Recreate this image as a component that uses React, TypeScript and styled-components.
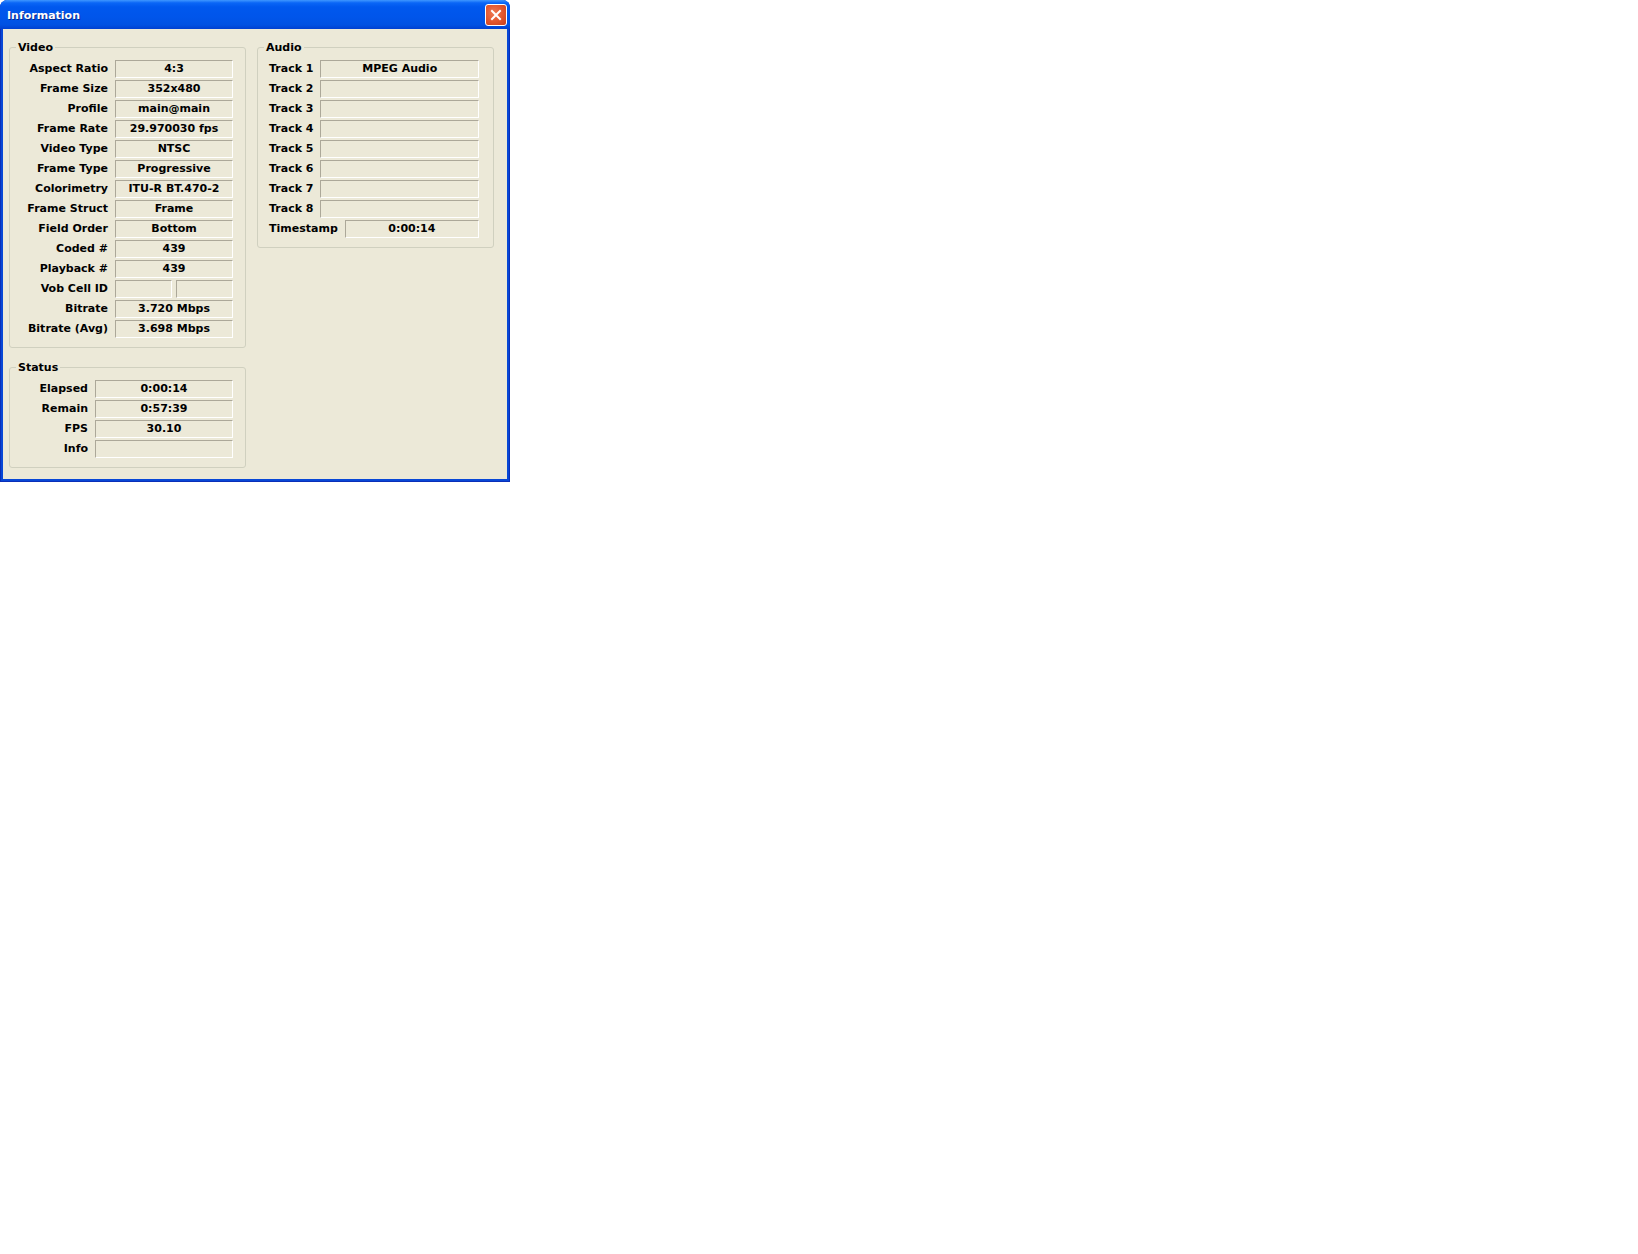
import React from 'react';
import styled, { createGlobalStyle } from 'styled-components';

const GlobalStyle = createGlobalStyle`
  body {
    margin: 0;
    background: #ffffff;
    font-family: "DejaVu Sans", Tahoma, sans-serif;
  }
`;

const Window = styled.div`
  width: 510px;
  height: 482px;
  box-sizing: border-box;
  display: flex;
  flex-direction: column;
  background: #0847d6;
  border-radius: 8px 8px 0 0;
  box-shadow: inset 1px 0 #0a2fb8, inset -1px 0 #0a2fb8, inset 0 -1px #0a2fb8;
`;

const TitleBar = styled.div`
  height: 29px;
  flex: none;
  display: flex;
  align-items: center;
  justify-content: space-between;
  padding: 0 3px 0 7px;
  border-radius: 7px 7px 0 0;
  background: linear-gradient(
    to bottom,
    #3f97ff 0%,
    #0a66f6 10%,
    #0058ee 24%,
    #0055ea 60%,
    #0051e2 86%,
    #0040d0 100%
  );
`;

const TitleText = styled.span`
  color: #ffffff;
  font-weight: bold;
  font-size: 11px;
  text-shadow: 1px 1px #0b2a8a;
  margin-top: 2px;
`;

const CloseButton = styled.div`
  width: 22px;
  height: 22px;
  box-sizing: border-box;
  border: 1px solid #ffffff;
  border-radius: 3px;
  display: flex;
  align-items: center;
  justify-content: center;
  background: radial-gradient(circle at 40% 40%, #ee7a55 0%, #e2552c 55%, #c53f1d 100%);
`;

const Client = styled.div`
  flex: 1;
  margin: 0 3px 3px;
  background: #ece9d8;
  display: flex;
  align-items: flex-start;
  gap: 11px;
  padding: 12px 0 0 6px;
`;

const Column = styled.div`
  display: flex;
  flex-direction: column;
  gap: 13px;
`;

const Group = styled.fieldset<{ $width: number }>`
  margin: 0;
  width: ${(p) => p.$width}px;
  box-sizing: border-box;
  padding: 0;
  border: 1px solid #d0d0bf;
  border-radius: 3px;
  min-width: 0;
`;

const Legend = styled.legend`
  padding: 0 2px;
  margin-left: 6px;
  font-weight: bold;
  font-size: 11px;
  line-height: 13px;
  color: #000000;
`;

const GroupBody = styled.div<{ $pad: string }>`
  padding: ${(p) => p.$pad};
`;

const FieldGrid = styled.div<{ $label: number; $value: number }>`
  display: grid;
  grid-template-columns: ${(p) => p.$label}px ${(p) => p.$value}px;
  grid-auto-rows: 18px;
  column-gap: 7px;
  row-gap: 2px;
`;

const Label = styled.div<{ $align?: string }>`
  font-weight: bold;
  font-size: 11px;
  line-height: 18px;
  color: #000000;
  text-align: ${(p) => p.$align || 'right'};
  white-space: nowrap;
`;

const ValueBox = styled.div`
  flex: 1;
  height: 18px;
  box-sizing: border-box;
  border: 1px solid;
  border-color: #aca899 #ffffff #ffffff #aca899;
  font-weight: bold;
  font-size: 11px;
  line-height: 16px;
  text-align: center;
  color: #000000;
  white-space: nowrap;
  overflow: hidden;
`;

const SplitValue = styled.div`
  display: flex;
  gap: 4px;
`;

const AudioList = styled.div`
  display: flex;
  flex-direction: column;
  gap: 2px;
`;

const AudioRow = styled.div`
  display: flex;
  align-items: center;
  gap: 7px;
  height: 18px;
`;

const videoRows: [string, string | null][] = [
  ['Aspect Ratio', '4:3'],
  ['Frame Size', '352x480'],
  ['Profile', 'main@main'],
  ['Frame Rate', '29.970030 fps'],
  ['Video Type', 'NTSC'],
  ['Frame Type', 'Progressive'],
  ['Colorimetry', 'ITU-R BT.470-2'],
  ['Frame Struct', 'Frame'],
  ['Field Order', 'Bottom'],
  ['Coded #', '439'],
  ['Playback #', '439'],
  ['Vob Cell ID', null],
  ['Bitrate', '3.720 Mbps'],
  ['Bitrate (Avg)', '3.698 Mbps'],
];

const statusRows = [
  ['Elapsed', '0:00:14'],
  ['Remain', '0:57:39'],
  ['FPS', '30.10'],
  ['Info', ''],
];

const audioRows = [
  ['Track 1', 'MPEG Audio'],
  ['Track 2', ''],
  ['Track 3', ''],
  ['Track 4', ''],
  ['Track 5', ''],
  ['Track 6', ''],
  ['Track 7', ''],
  ['Track 8', ''],
  ['Timestamp', '0:00:14'],
];

const App: React.FC = () => {
  return (
    <>
      <GlobalStyle />
      <Window>
        <TitleBar>
          <TitleText>Information</TitleText>
          <CloseButton>
            <svg width="12" height="12" viewBox="0 0 12 12">
              <path d="M2 2 L10 10 M10 2 L2 10" stroke="#ffffff" strokeWidth="2" strokeLinecap="square" />
            </svg>
          </CloseButton>
        </TitleBar>

        <Client>
          <Column>
            <Group $width={237}>
              <Legend>Video</Legend>
              <GroupBody $pad="6px 12px 9px 0">
                <FieldGrid $label={98} $value={118}>
                  {videoRows.map(([label, value]) => (
                    <React.Fragment key={label}>
                      <Label>{label}</Label>
                      {value === null ? (
                        <SplitValue>
                          <ValueBox />
                          <ValueBox />
                        </SplitValue>
                      ) : (
                        <ValueBox>{value}</ValueBox>
                      )}
                    </React.Fragment>
                  ))}
                </FieldGrid>
              </GroupBody>
            </Group>

            <Group $width={237}>
              <Legend>Status</Legend>
              <GroupBody $pad="6px 12px 9px 0">
                <FieldGrid $label={78} $value={138}>
                  {statusRows.map(([label, value]) => (
                    <React.Fragment key={label}>
                      <Label>{label}</Label>
                      <ValueBox>{value}</ValueBox>
                    </React.Fragment>
                  ))}
                </FieldGrid>
              </GroupBody>
            </Group>
          </Column>

          <Group $width={237}>
            <Legend>Audio</Legend>
            <GroupBody $pad="6px 14px 9px 11px">
              <AudioList>
                {audioRows.map(([label, value]) => (
                  <AudioRow key={label}>
                    <Label $align="left">{label}</Label>
                    <ValueBox>{value}</ValueBox>
                  </AudioRow>
                ))}
              </AudioList>
            </GroupBody>
          </Group>
        </Client>
      </Window>
    </>
  );
};

export default App;
